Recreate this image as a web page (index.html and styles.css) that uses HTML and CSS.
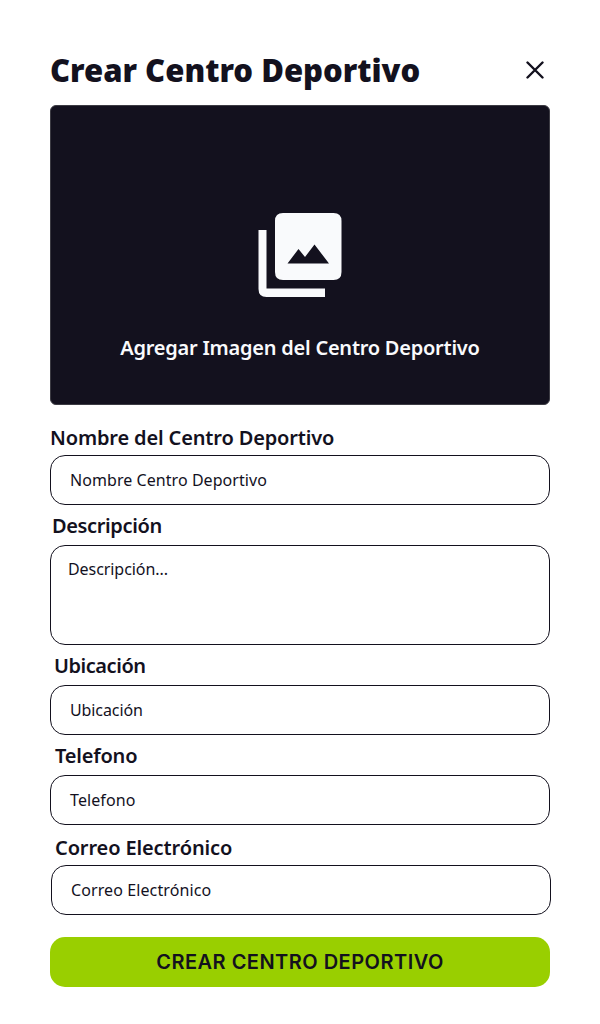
FILE: index.html
```
<!DOCTYPE html>
<html lang="es">
<head>
<meta charset="utf-8">
<title>Crear Centro Deportivo</title>
<link rel="stylesheet" href="styles.css">
</head>
<body>
<main class="page">
  <header class="header">
    <h1 class="title">Crear Centro Deportivo</h1>
    <button class="close" type="button" aria-label="Cerrar">
      <svg width="18" height="18" viewBox="0 0 18 18"><path d="M1.500 1.500 16.500 16.500M16.500 1.500 1.500 16.500"/></svg>
    </button>
  </header>
  <section class="upload">
    <svg class="upload-icon" width="84" height="84" viewBox="0 0 84 84">
      <path fill-rule="evenodd" d="M25 0H75.500Q83.500 0 83.500 8V59Q83.500 67 75.500 67H25Q17 67 17 59V8Q17 0 25 0ZM29.500 50.500H71L56.500 31.500 47 44 40.500 36Z"/>
      <path d="M0.500 17H8.500V75.500H67V84H8.500Q0.500 84 0.500 76Z"/>
    </svg>
    <span class="upload-text">Agregar Imagen del Centro Deportivo</span>
  </section>
  <form class="form">
    <label class="label label-name">Nombre del Centro Deportivo</label>
    <div class="field field-name">Nombre Centro Deportivo</div>
    <label class="label label-desc">Descripción</label>
    <div class="field field-area">Descripción...</div>
    <label class="label label-place">Ubicación</label>
    <div class="field field-place">Ubicación</div>
    <label class="label label-phone">Telefono</label>
    <div class="field field-phone">Telefono</div>
    <label class="label label-mail">Correo Electrónico</label>
    <div class="field field-mail">Correo Electrónico</div>
    <button class="submit" type="button">CREAR CENTRO DEPORTIVO</button>
  </form>
</main>
</body>
</html>
```
FILE: styles.css
```
* { box-sizing: border-box; }
body {
  margin: 0;
  background: #fff;
  color: #13111e;
  font-family: "Noto Sans", "Open Sans", sans-serif;
}
.page { width: 500px; height: 1024px; margin: 0 auto; padding-top: 45px; }
.header { display: flex; justify-content: space-between; height: 60px; padding-right: 6px; }
.title { margin: 0; font-size: 31px; font-weight: 900; line-height: 50px; letter-spacing: 0; white-space: nowrap; }
.close { width: 18px; height: 18px; margin-top: 16px; padding: 0; border: 0; background: none; }
.close svg { display: block; fill: none; stroke: #13111e; stroke-width: 2.4; stroke-linecap: round; }
.upload {
  display: flex;
  flex-direction: column;
  align-items: center;
  height: 300px;
  padding-top: 107px;
  border: 1px solid #3c3b43;
  border-radius: 6px;
  background: #13111e;
  color: #f9fafc;
}
.upload-icon { fill: #f9fafc; }
.upload-text { margin-top: 37px; font-size: 20px; font-weight: 600; line-height: 28px; letter-spacing: -0.24px; white-space: nowrap; }
.form { display: flex; flex-direction: column; }
.label { font-size: 20px; font-weight: 600; line-height: 28px; white-space: nowrap; }
.label-name { margin: 19px 0 3px; letter-spacing: -0.15px; }
.label-desc { margin: 7px 0 5px 2px; letter-spacing: -0.37px; }
.label-place { margin: 7px 0 5px 4px; letter-spacing: -0.45px; }
.label-phone { margin: 7px 0 5px 5px; letter-spacing: -0.2px; }
.label-mail { margin: 9px 0 3px 5px; letter-spacing: -0.12px; }
.field {
  height: 50px;
  padding: 12px 19px;
  border: 1px solid #13111e;
  border-radius: 15px;
  font-size: 16px;
  line-height: 24px;
  white-space: nowrap;
}
.field-name { letter-spacing: 0.06px; }
.field-area { height: 100px; padding: 11px 17px; letter-spacing: -0.07px; }
.field-place { letter-spacing: -0.1px; }
.field-phone { letter-spacing: 0.1px; }
.field-mail { position: relative; left: 1px; letter-spacing: 0.1px; }
.submit {
  height: 50px;
  margin-top: 22px;
  padding: 0;
  border: 0;
  border-radius: 15px;
  background: #99cf00;
  color: #13111e;
  font: 600 20px/50px Inter, "Noto Sans", sans-serif;
  letter-spacing: 0.48px;
}
```
